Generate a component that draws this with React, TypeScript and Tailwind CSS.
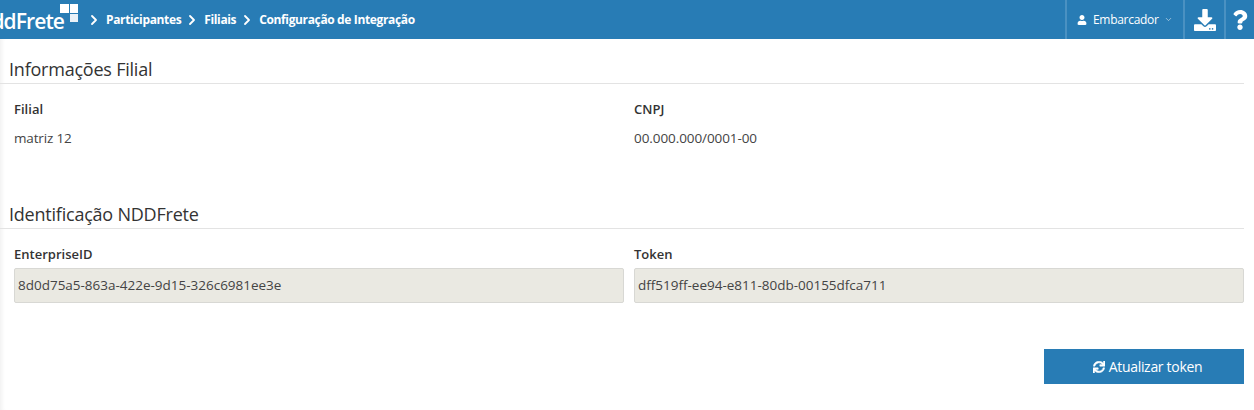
import { FaUser, FaDownload, FaQuestion, FaSync } from "react-icons/fa";
import { ChevronRight, ChevronDown } from "lucide-react";

const font = { fontFamily: '"Open Sans", "Noto Sans", sans-serif' };

function Crumb({ children }: { children: string }) {
  return (
    <div className="flex items-center">
      <ChevronRight size={16} strokeWidth={2.75} className="text-white mr-[4px]" />
      <span className="text-[12px] font-bold text-white tracking-[-0.36px]">{children}</span>
    </div>
  );
}

function Section({ children }: { children: string }) {
  return (
    <div className="border-b border-[#e3e3e3] pl-[9px] h-[29px] flex items-center">
      <h2 className="text-[18px] text-[#333] tracking-[-0.22px] leading-none">{children}</h2>
    </div>
  );
}

function Field({ label, value }: { label: string; value: string }) {
  return (
    <div className="flex-1 min-w-0">
      <div className="text-[13px] font-semibold text-[#333] tracking-[0.02px] h-[20px] leading-[20px]">{label}</div>
      <div className="mt-[4px] h-[35px] bg-[#eae9e2] border border-[#d8d8d4] rounded-[2px] pl-[3px] flex items-center text-[13.5px] text-[#444] tracking-[-0.01px]">
        {value}
      </div>
    </div>
  );
}

export default function App() {
  return (
    <div className="w-[1254px] h-[410px] bg-white overflow-hidden" style={font}>
      <header className="h-[39px] bg-[#287cb5] flex items-stretch overflow-hidden">
        <div className="relative w-[79px] shrink-0 overflow-hidden">
          <span className="absolute right-[15px] top-[3px] text-[21px] font-semibold text-white tracking-[-0.9px] leading-[36px] whitespace-nowrap">nddFrete</span>
          <div className="absolute left-[60px] top-[4px] w-[18px] h-[18px] grid grid-cols-2 grid-rows-2 gap-[1px]">
            <div className="bg-white" />
            <div className="bg-white" />
            <div />
            <div className="bg-white/90" />
          </div>
        </div>
        <nav className="flex items-center gap-[3px] ml-[7px]">
          <Crumb>Participantes</Crumb>
          <Crumb>Filiais</Crumb>
          <Crumb>Configuração de Integração</Crumb>
        </nav>
        <div className="ml-auto flex items-stretch">
          <div className="w-[118px] border-l-2 border-[#4a91c2] flex items-center pl-[10px] text-white">
            <FaUser size={10} />
            <span className="ml-[6px] text-[12px] tracking-[-0.3px]">Embarcador</span>
            <ChevronDown size={9} className="ml-[5px] opacity-70" />
          </div>
          <div className="w-[41px] border-l-2 border-[#4a91c2] flex items-center justify-center text-white">
            <FaDownload size={22} />
          </div>
          <div className="w-[30px] border-l-2 border-[#4a91c2] flex items-center justify-center text-white">
            <FaQuestion size={20} />
          </div>
        </div>
      </header>

      <main className="pr-[10px] h-[371px] shadow-[inset_5px_0_4px_-3px_rgba(0,0,0,0.06)]">
        <div className="pt-[16px]">
          <Section>Informações Filial</Section>
        </div>
        <div className="flex gap-[10px] pl-[14px] pt-[15px]">
          <div className="flex-1 text-[13.5px] text-[#333]">
            <div className="text-[13px] font-semibold h-[20px] leading-[20px] tracking-[0.02px]">Filial</div>
            <div className="mt-[9px] h-[20px] leading-[20px] text-[#444] tracking-[-0.15px]">matriz 12</div>
          </div>
          <div className="flex-1 text-[13.5px] text-[#333]">
            <div className="text-[13px] font-semibold h-[20px] leading-[20px] tracking-[0.02px]">CNPJ</div>
            <div className="mt-[9px] h-[20px] leading-[20px] text-[#444] tracking-[-0.08px]">00.000.000/0001-00</div>
          </div>
        </div>

        <div className="pt-[52px]">
          <Section>Identificação NDDFrete</Section>
        </div>
        <div className="flex gap-[10px] pl-[14px] pt-[15px]">
          <Field label="EnterpriseID" value="8d0d75a5-863a-422e-9d15-326c6981ee3e" />
          <Field label="Token" value="dff519ff-ee94-e811-80db-00155dfca711" />
        </div>
        <div className="flex justify-end pt-[46px]">
          <button className="w-[200px] h-[35px] bg-[#287cb5] text-white flex items-center justify-center pl-[7px] text-[14px] tracking-[-0.3px]">
            <FaSync size={12} className="mr-[4px] stroke-white stroke-[20px]" />
            Atualizar token
          </button>
        </div>
      </main>
    </div>
  );
}
